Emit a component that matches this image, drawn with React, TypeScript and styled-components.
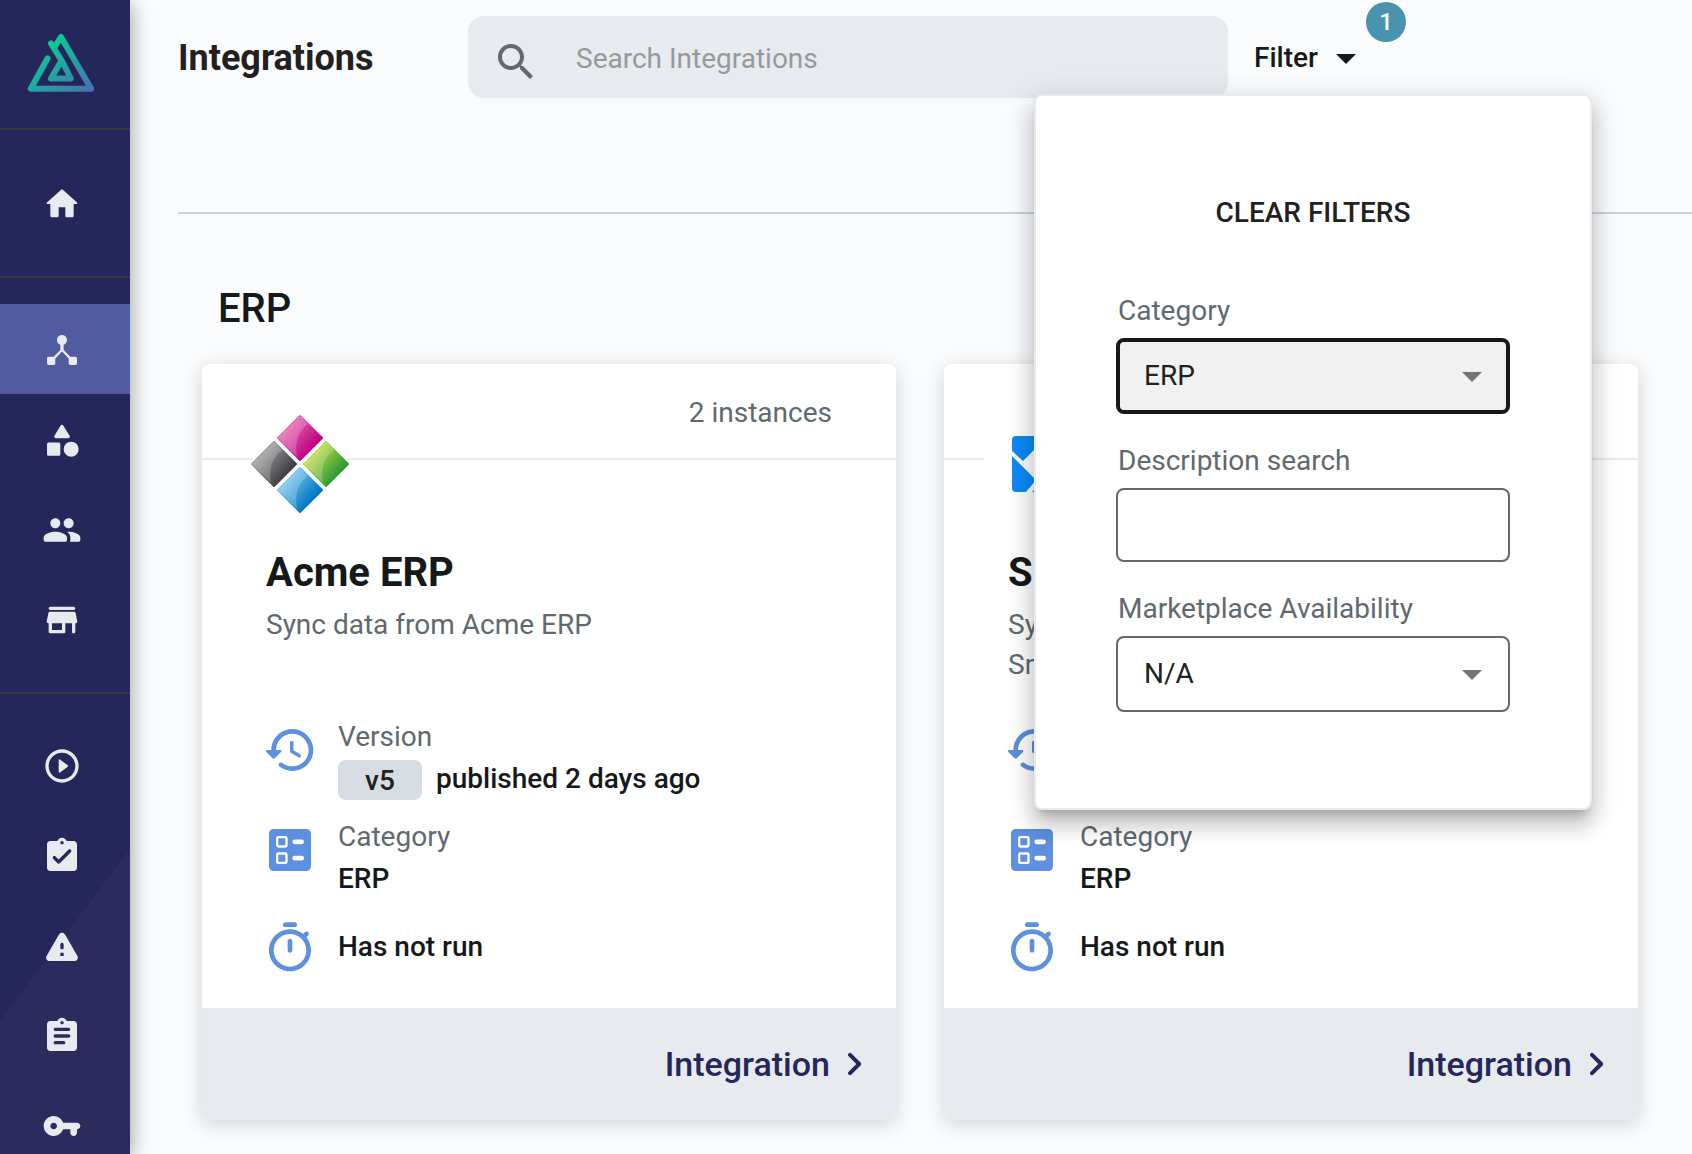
import React from "react";
import styled, { createGlobalStyle, css } from "styled-components";

const color = {
  ink: "#16191a",
  text: "#212121",
  muted: "#5f696e",
  line: "#cbd3dc",
  panel: "#e7eaef",
  navy: "#25265a",
  active: "#515b9f",
  blue: "#5d90e0",
};

const GlobalStyle = createGlobalStyle`
  *, *::before, *::after { box-sizing: border-box; }
  html, body, #root { height: 100%; }
  body {
    margin: 0;
    overflow: hidden;
    background: #fafbfd;
    color: ${color.ink};
    font: 400 28px/40px Roboto, "Liberation Sans", sans-serif;
  }
  h1, h2, h3, p { margin: 0; font-size: inherit; font-weight: inherit; }
  button, input, select { font: inherit; color: inherit; }
`;

/* ---------- icons ---------- */

const Svg = styled.svg<{ $size: number }>`
  display: block;
  flex: none;
  width: ${(p) => p.$size}px;
  height: ${(p) => p.$size}px;
  fill: currentColor;
`;

const icons = {
  home: "M10 19v-5h4v5c0 .55.45 1 1 1h3c.55 0 1-.45 1-1v-7h1.7c.46 0 .68-.57.33-.87L12.67 3.6c-.38-.34-.96-.34-1.34 0l-8.36 7.53c-.34.3-.13.87.33.87H5v7c0 .55.45 1 1 1h3c.55 0 1-.45 1-1z",
  hub: "M17 16l-4-4V8.82C14.16 8.4 15 7.3 15 6c0-1.66-1.34-3-3-3S9 4.34 9 6c0 1.3.84 2.4 2 2.82V12l-4 4H4c-.55 0-1 .45-1 1v3c0 .55.45 1 1 1h3c.55 0 1-.45 1-1v-2.95l4-4.2 4 4.2V20c0 .55.45 1 1 1h3c.55 0 1-.45 1-1v-3c0-.55-.45-1-1-1h-3z",
  category:
    "M11.15 3.4L7.43 9.48c-.41.66.07 1.52.85 1.52h7.43c.78 0 1.26-.86.85-1.52L12.85 3.4c-.39-.64-1.31-.64-1.7 0zM17.5 13a4.5 4.5 0 1 0 0 9 4.5 4.5 0 0 0 0-9zM4 21.5h6c.55 0 1-.45 1-1v-6c0-.55-.45-1-1-1H4c-.55 0-1 .45-1 1v6c0 .55.45 1 1 1z",
  people:
    "M16 11c1.66 0 2.99-1.34 2.99-3S17.66 5 16 5s-3 1.34-3 3 1.34 3 3 3zm-8 0c1.66 0 2.99-1.34 2.99-3S9.66 5 8 5 5 6.34 5 8s1.34 3 3 3zm0 2c-2.33 0-7 1.17-7 3.5V18c0 .55.45 1 1 1h12c.55 0 1-.45 1-1v-1.5c0-2.33-4.67-3.5-7-3.5zm8 0c-.29 0-.62.02-.97.05.02.01.03.03.04.04 1.14.83 1.93 1.94 1.93 3.41V18c0 .35-.07.69-.18 1H22c.55 0 1-.45 1-1v-1.5c0-2.33-4.67-3.5-7-3.5z",
  store:
    "M5 6h14c.55 0 1-.45 1-1s-.45-1-1-1H5c-.55 0-1 .45-1 1s.45 1 1 1zm15.16 1.8c-.09-.46-.5-.8-.98-.8H4.82c-.48 0-.89.34-.98.8l-1 5c-.12.62.35 1.2.98 1.2H4v5c0 .55.45 1 1 1h8c.55 0 1-.45 1-1v-5h4v5c0 .55.45 1 1 1s1-.45 1-1v-5h.18c.63 0 1.1-.58.98-1.2l-1-5zM12 18H6v-4h6v4z",
  play: "M10.8 15.9l4.67-3.5c.27-.2.27-.6 0-.8L10.8 8.1c-.33-.25-.8-.01-.8.4v7c0 .41.47.65.8.4zM12 2C6.48 2 2 6.48 2 12s4.48 10 10 10 10-4.48 10-10S17.52 2 12 2zm0 18c-4.41 0-8-3.59-8-8s3.59-8 8-8 8 3.59 8 8-3.59 8-8 8z",
  task: "M19 3h-4.18C14.4 1.84 13.3 1 12 1s-2.4.84-2.82 2H5c-1.1 0-2 .9-2 2v14c0 1.1.9 2 2 2h14c1.1 0 2-.9 2-2V5c0-1.1-.9-2-2-2zm-7 0c.55 0 1 .45 1 1s-.45 1-1 1-1-.45-1-1 .45-1 1-1zm-2.71 13.29L6.7 13.7c-.39-.39-.39-1.02 0-1.41.39-.39 1.02-.39 1.41 0L10 14.17l5.88-5.88c.39-.39 1.02-.39 1.41 0 .39.39.39 1.02 0 1.41l-6.59 6.59c-.38.39-1.02.39-1.41 0z",
  alert:
    "M4.47 21h15.06c1.54 0 2.5-1.67 1.73-3L13.73 4.99c-.77-1.33-2.69-1.33-3.46 0L2.74 18c-.77 1.33.19 3 1.73 3zM12 14c-.55 0-1-.45-1-1v-2c0-.55.45-1 1-1s1 .45 1 1v2c0 .55-.45 1-1 1zm1 4h-2v-2h2v2z",
  log: "M19 3h-4.18C14.4 1.84 13.3 1 12 1s-2.4.84-2.82 2H5c-1.1 0-2 .9-2 2v14c0 1.1.9 2 2 2h14c1.1 0 2-.9 2-2V5c0-1.1-.9-2-2-2zm-7 0c.55 0 1 .45 1 1s-.45 1-1 1-1-.45-1-1 .45-1 1-1zm1 14H8c-.55 0-1-.45-1-1s.45-1 1-1h5c.55 0 1 .45 1 1s-.45 1-1 1zm3-4H8c-.55 0-1-.45-1-1s.45-1 1-1h8c.55 0 1 .45 1 1s-.45 1-1 1zm0-4H8c-.55 0-1-.45-1-1s.45-1 1-1h8c.55 0 1 .45 1 1s-.45 1-1 1z",
  key: "M12.65 10C11.7 7.31 8.9 5.5 5.77 6.12c-2.29.46-4.15 2.29-4.63 4.58C.32 14.57 3.26 18 7 18c2.61 0 4.83-1.67 5.65-4H17v2c0 1.1.9 2 2 2s2-.9 2-2v-2c1.1 0 2-.9 2-2s-.9-2-2-2h-8.35zM7 14c-1.1 0-2-.9-2-2s.9-2 2-2 2 .9 2 2-.9 2-2 2z",
  search:
    "M15.5 14h-.79l-.28-.27C15.41 12.59 16 11.11 16 9.5 16 5.91 13.09 3 9.5 3S3 5.91 3 9.5 5.91 16 9.5 16c1.61 0 3.09-.59 4.23-1.57l.27.28v.79l5 4.99L20.49 19l-4.99-5zm-6 0C7.01 14 5 11.99 5 9.5S7.01 5 9.5 5 14 7.01 14 9.5 11.99 14 9.5 14z",
  drop: "M7 10l5 5 5-5z",
  history:
    "M13.26 3C8.17 2.86 4 6.95 4 12H2.21c-.45 0-.67.54-.35.85l2.79 2.8c.2.2.51.2.71 0l2.79-2.8c.31-.31.09-.85-.36-.85H6c0-3.9 3.18-7.05 7.1-7 3.72.05 6.85 3.18 6.9 6.9.05 3.91-3.1 7.1-7 7.1-1.61 0-3.1-.55-4.28-1.48-.4-.31-.96-.28-1.32.08-.42.43-.39 1.13.08 1.5C8.98 20.25 10.9 21 13 21c5.05 0 9.14-4.17 9-9.26-.13-4.69-4.05-8.61-8.74-8.74zM12.75 8c-.41 0-.75.34-.75.75v3.68c0 .35.19.68.49.86l3.12 1.85c.36.21.82.09 1.03-.26.21-.36.09-.82-.26-1.03l-2.88-1.71v-3.4c0-.4-.34-.74-.75-.74z",
  ballot:
    "M5 3h14a2 2 0 0 1 2 2v14a2 2 0 0 1-2 2H5a2 2 0 0 1-2-2V5a2 2 0 0 1 2-2zM14 7.5a1 1 0 0 0 0 2h3a1 1 0 0 0 0-2zM14 14.5a1 1 0 0 0 0 2h3a1 1 0 0 0 0-2zM7 6a1 1 0 0 0-1 1v3a1 1 0 0 0 1 1h3a1 1 0 0 0 1-1V7a1 1 0 0 0-1-1zM7 13a1 1 0 0 0-1 1v3a1 1 0 0 0 1 1h3a1 1 0 0 0 1-1v-3a1 1 0 0 0-1-1zM7 7h3v3H7zM7 14h3v3H7z",
  timer:
    "M10 3h4c.55 0 1-.45 1-1s-.45-1-1-1h-4c-.55 0-1 .45-1 1s.45 1 1 1zm2 11c.55 0 1-.45 1-1V9c0-.55-.45-1-1-1s-1 .45-1 1v4c0 .55.45 1 1 1zm7.03-6.61l.75-.75c.38-.38.39-1.01 0-1.4l-.01-.01c-.39-.39-1.01-.38-1.4 0l-.75.75C16.07 4.74 14.12 4 12 4c-4.8 0-8.88 3.96-9 8.76C2.87 17.84 6.94 22 12 22c4.98 0 9-4.03 9-9 0-2.12-.74-4.07-1.97-5.61zM12 20c-3.87 0-7-3.13-7-7s3.13-7 7-7 7 3.13 7 7-3.13 7-7 7z",
  next: "M9.29 15.88L13.17 12 9.29 8.12c-.39-.39-.39-1.02 0-1.41.39-.39 1.02-.39 1.41 0l4.59 4.59c.39.39.39 1.02 0 1.41L10.7 17.3c-.39.39-1.02.39-1.41 0-.38-.39-.39-1.03 0-1.42z",
};

type IconName = keyof typeof icons;

const Icon = ({ name, size }: { name: IconName; size: number }) => (
  <Svg viewBox="0 0 24 24" $size={size} aria-hidden="true">
    <path d={icons[name]} fillRule="evenodd" />
  </Svg>
);

const BrandSvg = styled.svg`
  display: block;
  width: 72px;
  height: 64px;
`;

const BrandMark = () => (
  <BrandSvg viewBox="25 31 72 64" role="img" aria-label="Home">
    <defs>
      <linearGradient id="brand" gradientUnits="userSpaceOnUse" x1="50" y1="46" x2="88" y2="92">
        <stop offset="0" stopColor="#0ac795" />
        <stop offset="1" stopColor="#4a6fb2" />
      </linearGradient>
    </defs>
    <path
      d="M47.5 58.5L30.8 88.8H91.2L61 37L54 48M51 43.5L62.5 62L70.8 78.5H51L61 61.5"
      fill="none"
      stroke="url(#brand)"
      strokeWidth="6"
      strokeLinecap="round"
      strokeLinejoin="round"
    />
  </BrandSvg>
);

const LogoSvg = styled.svg`
  display: block;
  width: 116px;
  height: 116px;
`;

const tiles = [
  { id: "pink", x: 58, y: 32, from: "#e56bb0", to: "#c0047f" },
  { id: "grey", x: 32, y: 58, from: "#a3a4a6", to: "#3f3f41" },
  { id: "green", x: 84, y: 58, from: "#c9de4a", to: "#2f9a35" },
  { id: "cyan", x: 58, y: 84, from: "#7cc8ee", to: "#0277bf" },
];

const AcmeLogo = () => (
  <LogoSvg viewBox="0 0 116 116" role="img" aria-label="Acme ERP logo">
    <defs>
      {tiles.map((t) => (
        <linearGradient key={t.id} id={t.id} x1="0.2" y1="0.2" x2="0.8" y2="0.7">
          <stop offset="0" stopColor={t.from} />
          <stop offset="1" stopColor={t.to} />
        </linearGradient>
      ))}
    </defs>
    <path d="M58 6L110 58L58 110L6 58Z" fill="#fff" />
    {tiles.map((t) => (
      <g key={t.id} transform={`translate(${t.x} ${t.y})`}>
        <path
          d="M0 -22L22 0L0 22L-22 0Z"
          fill={`url(#${t.id})`}
          stroke={`url(#${t.id})`}
          strokeWidth="2"
          strokeLinejoin="round"
        />
        <path d="M0 -22L8 -14Q-7 -3 -3 19L-22 0Z" fill="#fff" opacity="0.2" />
      </g>
    ))}
  </LogoSvg>
);

const SmartLogo = () => (
  <LogoSvg viewBox="0 0 116 116" role="img" aria-label="Smart logo">
    <rect width="116" height="116" fill="#fff" />
    <g fill="#0d8bf8">
      <path d="M32 30H84Q88 30 88 34V44L77 55L58 36L39 55L28 45V34Q28 30 32 30Z" />
      <path d="M28 50L52 74L42 86H32Q28 86 28 82Z" />
      <path d="M48 86L64 70L88 50V82Q88 86 84 86Z" />
    </g>
  </LogoSvg>
);

/* ---------- layout ---------- */

const Shell = styled.div`
  display: flex;
  min-height: 100%;
`;

const Sidebar = styled.nav`
  flex: none;
  width: 130px;
  height: 100vh;
  overflow: hidden;
  z-index: 1;
  color: ${color.panel};
  background: linear-gradient(127deg, ${color.navy} 77%, #2b2b5d 77%);
  box-shadow: 0 4px 20px rgba(0, 0, 0, 0.4);
`;

const Brand = styled.a`
  display: block;
  height: 130px;
  padding: 31px 0 0 25px;
  border-bottom: 2px solid #36393f;
`;

const NavGroup = styled.div<{ $top: number }>`
  padding: ${(p) => p.$top}px 0 28px;
  & + & {
    border-top: 2px solid #36393f;
  }
`;

const NavLink = styled.a<{ $active?: boolean }>`
  display: flex;
  align-items: center;
  height: 90px;
  padding: 2px 0 0 42px;
  color: inherit;
  background: ${(p) => (p.$active ? color.active : "transparent")};
`;

const Main = styled.main`
  flex: 1;
  min-width: 0;
  padding-left: 48px;
`;

const TopBar = styled.header`
  display: flex;
  align-items: center;
  height: 214px;
  padding: 16px 0 114px;
  border-bottom: 2px solid ${color.line};
`;

const PageTitle = styled.h1`
  && {
    width: 290px;
    padding-top: 2px;
    color: ${color.text};
    font-size: 36px;
    font-weight: 700;
  }
`;

const SearchBox = styled.label`
  display: flex;
  align-items: center;
  flex: 0 1 760px;
  height: 82px;
  padding: 10px 24px 0;
  gap: 36px;
  border-radius: 16px;
  background: ${color.panel};
  color: ${color.muted};
`;

const SearchInput = styled.input`
  flex: 1;
  min-width: 0;
  height: 48px;
  margin-bottom: 8px;
  padding: 0;
  border: 0;
  outline: 0;
  background: transparent;
  &::placeholder {
    color: #96999c;
    opacity: 1;
  }
`;

const FilterAnchor = styled.div`
  position: relative;
  margin-left: 26px;
`;

const FilterButton = styled.button`
  display: flex;
  align-items: center;
  gap: 4px;
  height: 48px;
  padding: 2px 0 0;
  border: 0;
  background: none;
  font-weight: 500;
`;

const Badge = styled.span`
  position: absolute;
  top: -31px;
  left: 112px;
  width: 40px;
  height: 40px;
  border-radius: 20px;
  background: #4a93ae;
  color: #fff;
  font-size: 24px;
  font-weight: 500;
  text-align: center;
`;

const FilterPanel = styled.form`
  position: absolute;
  z-index: 2;
  top: 61px;
  left: -220px;
  width: 558px;
  padding: 97px 80px 96px;
  border: 2px solid ${color.panel};
  border-radius: 8px;
  background: #fff;
  box-shadow: 0 10px 10px -6px rgba(0, 0, 0, 0.2), 0 16px 20px 2px rgba(0, 0, 0, 0.14),
    0 6px 28px 4px rgba(0, 0, 0, 0.12);
`;

const ClearButton = styled.button`
  display: block;
  width: 100%;
  margin-bottom: 61px;
  padding: 0;
  border: 0;
  background: none;
  color: ${color.text};
  font-weight: 500;
  text-transform: uppercase;
`;

const Field = styled.div`
  & + & {
    margin-top: 30px;
  }
`;

const FieldLabel = styled.label`
  display: block;
  margin-bottom: 10px;
  padding-left: 2px;
  color: ${color.muted};
  line-height: 34px;
`;

const fieldBox = css`
  display: block;
  width: 100%;
  padding: 0 26px;
  border: 2px solid ${color.muted};
  border-radius: 8px;
  outline: 0;
  background: #fff;
  color: ${color.text};
`;

const TextField = styled.input`
  ${fieldBox}
  height: 74px;
`;

const SelectWrap = styled.div`
  position: relative;
  color: #757575;
  svg {
    position: absolute;
    top: 14px;
    right: 14px;
    pointer-events: none;
  }
`;

const SelectField = styled.select<{ $focused?: boolean }>`
  ${fieldBox}
  appearance: none;
  height: 76px;
  ${(p) =>
    p.$focused &&
    css`
      padding: 0 24px;
      border: 4px solid ${color.ink};
      background: #f1f1f1;
    `}
`;

const Section = styled.section`
  padding: 71px 54px 34px 24px;
`;

const SectionTitle = styled.h2`
  && {
    margin: 0 0 31px 16px;
    font-size: 40px;
    font-weight: 500;
    line-height: 48px;
  }
`;

const Grid = styled.div`
  display: grid;
  grid-template-columns: repeat(2, minmax(0, 1fr));
  gap: 48px;
`;

const Card = styled.article`
  display: flex;
  flex-direction: column;
  border-radius: 8px;
  background: #fefffe;
  box-shadow: 0 4px 20px rgba(0, 0, 0, 0.16);
`;

const CardHeader = styled.div`
  position: relative;
  height: 96px;
  padding: 29px 64px 0;
  border-bottom: 2px solid #e8eaf0;
  color: ${color.muted};
  text-align: right;
`;

const CardLogo = styled.div`
  position: absolute;
  top: 42px;
  left: 40px;
`;

const CardBody = styled.div`
  flex: 1;
  padding: 89px 64px 32px;
`;

const CardTitle = styled.h3`
  && {
    margin-bottom: 8px;
    font-size: 40px;
    font-weight: 700;
    line-height: 48px;
  }
`;

const Description = styled.p`
  && {
    height: 80px;
    margin-bottom: 31px;
    color: ${color.muted};
    white-space: pre-line;
  }
`;

const FactList = styled.div`
  display: flex;
  flex-direction: column;
  gap: 16px;
  margin-left: -4px;
`;

const Fact = styled.div`
  display: flex;
  gap: 20px;
  align-items: flex-start;
`;

const FactIcon = styled.div<{ $top: number }>`
  padding-top: ${(p) => p.$top}px;
  color: ${color.blue};
`;

const FactText = styled.div<{ $top?: number }>`
  padding-top: ${(p) => p.$top ?? 0}px;
  line-height: 42px;
`;

const FactLabel = styled.div`
  color: ${color.muted};
`;

const FactValue = styled.div`
  display: flex;
  gap: 14px;
  font-weight: 500;
`;

const Chip = styled.span`
  width: 84px;
  height: 40px;
  margin-top: 2px;
  border-radius: 8px;
  background: #d6dce2;
  color: ${color.text};
  text-align: center;
`;

const CardFooter = styled.a`
  display: flex;
  align-items: center;
  justify-content: flex-end;
  height: 112px;
  padding-right: 18px;
  border-radius: 0 0 8px 8px;
  background: ${color.panel};
  color: ${color.navy};
  font-size: 34px;
  font-weight: 500;
  text-decoration: none;
`;

/* ---------- content ---------- */

const navGroups: { top: number; items: { icon: IconName; label: string; active?: boolean }[] }[] = [
  { top: 28, items: [{ icon: "home", label: "Home" }] },
  {
    top: 26,
    items: [
      { icon: "hub", label: "Integrations", active: true },
      { icon: "category", label: "Components" },
      { icon: "people", label: "Customers" },
      { icon: "store", label: "Marketplace" },
    ],
  },
  {
    top: 26,
    items: [
      { icon: "play", label: "Executions" },
      { icon: "task", label: "Tests" },
      { icon: "alert", label: "Alerts" },
      { icon: "log", label: "Logs" },
      { icon: "key", label: "Credentials" },
    ],
  },
];

const integrations = [
  { name: "Acme ERP", description: "Sync data from Acme ERP", Logo: AcmeLogo },
  { name: "Smart", description: "Sync to\nSmart", Logo: SmartLogo },
];

const IntegrationCard = ({ name, description, Logo }: (typeof integrations)[number]) => (
  <Card>
    <CardHeader>
      2 instances
      <CardLogo>
        <Logo />
      </CardLogo>
    </CardHeader>
    <CardBody>
      <CardTitle>{name}</CardTitle>
      <Description>{description}</Description>
      <FactList>
        <Fact>
          <FactIcon $top={6}>
            <Icon name="history" size={56} />
          </FactIcon>
          <FactText>
            <FactLabel>Version</FactLabel>
            <FactValue>
              <Chip>v5</Chip>
              <span>published 2 days ago</span>
            </FactValue>
          </FactText>
        </Fact>
        <Fact>
          <FactIcon $top={6}>
            <Icon name="ballot" size={56} />
          </FactIcon>
          <FactText>
            <FactLabel>Category</FactLabel>
            <FactValue>ERP</FactValue>
          </FactText>
        </Fact>
        <Fact>
          <FactIcon $top={4}>
            <Icon name="timer" size={56} />
          </FactIcon>
          <FactText $top={10}>
            <FactValue>Has not run</FactValue>
          </FactText>
        </Fact>
      </FactList>
    </CardBody>
    <CardFooter href="#integration">
      Integration
      <Icon name="next" size={48} />
    </CardFooter>
  </Card>
);

export default function App() {
  return (
    <>
      <GlobalStyle />
      <Shell>
        <Sidebar aria-label="Main">
          <Brand href="#home">
            <BrandMark />
          </Brand>
          {navGroups.map((group) => (
            <NavGroup key={group.items[0].icon} $top={group.top}>
              {group.items.map((item) => (
                <NavLink key={item.icon} href={`#${item.icon}`} aria-label={item.label} $active={item.active}>
                  <Icon name={item.icon} size={40} />
                </NavLink>
              ))}
            </NavGroup>
          ))}
        </Sidebar>
        <Main>
          <TopBar>
            <PageTitle>Integrations</PageTitle>
            <SearchBox>
              <Icon name="search" size={48} />
              <SearchInput type="search" placeholder="Search Integrations" aria-label="Search Integrations" />
            </SearchBox>
            <FilterAnchor>
              <FilterButton type="button" aria-expanded="true">
                Filter
                <Icon name="drop" size={48} />
              </FilterButton>
              <Badge>1</Badge>
              <FilterPanel>
                <ClearButton type="reset">Clear filters</ClearButton>
                <Field>
                  <FieldLabel htmlFor="category">Category</FieldLabel>
                  <SelectWrap>
                    <SelectField id="category" defaultValue="ERP" $focused>
                      <option>ERP</option>
                    </SelectField>
                    <Icon name="drop" size={48} />
                  </SelectWrap>
                </Field>
                <Field>
                  <FieldLabel htmlFor="description">Description search</FieldLabel>
                  <TextField id="description" type="text" />
                </Field>
                <Field>
                  <FieldLabel htmlFor="marketplace">Marketplace Availability</FieldLabel>
                  <SelectWrap>
                    <SelectField id="marketplace" defaultValue="N/A">
                      <option>N/A</option>
                    </SelectField>
                    <Icon name="drop" size={48} />
                  </SelectWrap>
                </Field>
              </FilterPanel>
            </FilterAnchor>
          </TopBar>
          <Section>
            <SectionTitle>ERP</SectionTitle>
            <Grid>
              {integrations.map((item) => (
                <IntegrationCard key={item.name} {...item} />
              ))}
            </Grid>
          </Section>
        </Main>
      </Shell>
    </>
  );
}
